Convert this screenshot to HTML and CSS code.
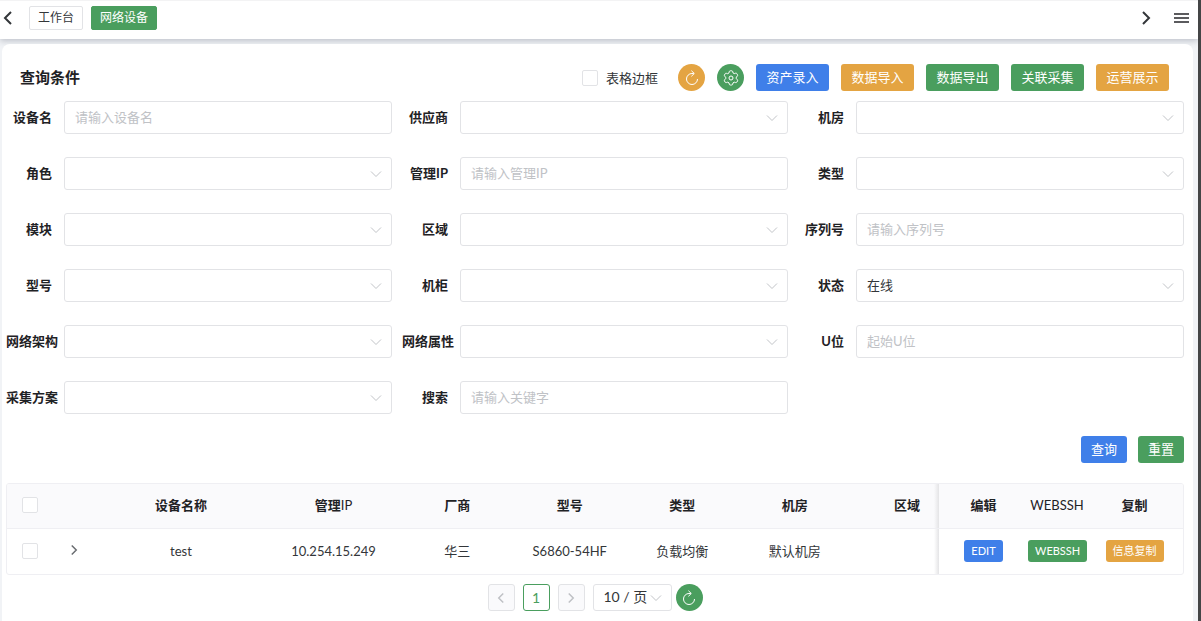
FILE: index.html
```html
<!DOCTYPE html>
<html lang="zh-CN">
<head>
<meta charset="utf-8">
<title>网络设备</title>
<link rel="stylesheet" href="styles.css">
</head>
<body>
<svg class="defs" aria-hidden="true">
  <symbol id="down" viewBox="0 0 12 12"><path d="M1 3.5 6 8.5 11 3.5"/></symbol>
  <symbol id="left" viewBox="0 0 16 16"><path d="M11 2 5 8l6 6"/></symbol>
  <symbol id="right" viewBox="0 0 16 16"><path d="m5 2 6 6-6 6"/></symbol>
  <symbol id="reload" viewBox="0 0 16 16"><path d="M9.800 3.500H8A5.500 5.500 0 1 0 13.500 9M7.400 .700l2.900 2.800-2.900 2.800"/></symbol>
  <symbol id="gear" viewBox="0 0 16 16"><path d="M6.3 1.6Q6.5 .8 7.3 .8h1.4q.8 0 1 .8l.3 1.3 1.3.7 1.3-.4q.8-.2 1.2.4l.7 1.2q.4.7-.2 1.3l-1 1v1.6l1 1q.6.6.2 1.3l-.7 1.2q-.4.6-1.2.4l-1.3-.4-1.3.7-.3 1.3q-.2.8-1 .8H7.3q-.8 0-1-.8L6 12.9l-1.300-.7-1.300.4q-.8.2-1.200-.4l-.7-1.200q-.4-.7.2-1.300l1-1V7.200l-1-1q-.6-.6-.2-1.300l.7-1.200q.4-.6 1.200-.4l1.300.4L6 2.900z"/><circle cx="8" cy="8" r="2"/></symbol>
</svg>

<header class="topbar">
  <button class="nav" aria-label="向左"><svg class="icon"><use href="#left"/></svg></button>
  <nav class="tabs">
    <a class="tab" href="#home">工作台</a>
    <a class="tab active" href="#devices">网络设备</a>
  </nav>
  <button class="nav" aria-label="向右"><svg class="icon"><use href="#right"/></svg></button>
  <button class="nav menu" aria-label="菜单"><svg class="icon" viewBox="0 0 16 16"><path d="M0 4h15M0 8h15M0 12h15"/></svg></button>
</header>

<main class="card">
  <div class="heading">
    <h1>查询条件</h1>
    <label class="border-toggle"><input class="check" type="checkbox">表格边框</label>
    <div class="actions">
      <button class="round orange" aria-label="刷新"><svg><use href="#reload"/></svg></button>
      <button class="round green" aria-label="设置"><svg><use href="#gear"/></svg></button>
      <button class="btn blue">资产录入</button>
      <button class="btn orange">数据导入</button>
      <button class="btn green">数据导出</button>
      <button class="btn green">关联采集</button>
      <button class="btn orange">运营展示</button>
    </div>
  </div>

  <form>
    <div class="fields">
      <div class="field"><label for="name">设备名</label><input id="name" type="text" placeholder="请输入设备名"></div>
      <div class="field"><label for="vendor">供应商</label><span class="select"><select id="vendor"><option></option></select><svg><use href="#down"/></svg></span></div>
      <div class="field"><label for="room">机房</label><span class="select"><select id="room"><option></option></select><svg><use href="#down"/></svg></span></div>

      <div class="field"><label for="role">角色</label><span class="select"><select id="role"><option></option></select><svg><use href="#down"/></svg></span></div>
      <div class="field"><label for="ip">管理IP</label><input id="ip" type="text" placeholder="请输入管理IP"></div>
      <div class="field"><label for="type">类型</label><span class="select"><select id="type"><option></option></select><svg><use href="#down"/></svg></span></div>

      <div class="field"><label for="module">模块</label><span class="select"><select id="module"><option></option></select><svg><use href="#down"/></svg></span></div>
      <div class="field"><label for="zone">区域</label><span class="select"><select id="zone"><option></option></select><svg><use href="#down"/></svg></span></div>
      <div class="field"><label for="serial">序列号</label><input id="serial" type="text" placeholder="请输入序列号"></div>

      <div class="field"><label for="model">型号</label><span class="select"><select id="model"><option></option></select><svg><use href="#down"/></svg></span></div>
      <div class="field"><label for="rack">机柜</label><span class="select"><select id="rack"><option></option></select><svg><use href="#down"/></svg></span></div>
      <div class="field"><label for="status">状态</label><span class="select"><select id="status"><option>在线</option></select><svg><use href="#down"/></svg></span></div>

      <div class="field"><label for="arch">网络架构</label><span class="select"><select id="arch"><option></option></select><svg><use href="#down"/></svg></span></div>
      <div class="field"><label for="attr">网络属性</label><span class="select"><select id="attr"><option></option></select><svg><use href="#down"/></svg></span></div>
      <div class="field"><label for="unit">U位</label><input id="unit" type="text" placeholder="起始U位"></div>

      <div class="field"><label for="plan">采集方案</label><span class="select"><select id="plan"><option></option></select><svg><use href="#down"/></svg></span></div>
      <div class="field"><label for="search">搜索</label><input id="search" type="text" placeholder="请输入关键字"></div>
    </div>
    <div class="submit">
      <button class="btn blue" type="button">查询</button>
      <button class="btn green" type="reset">重置</button>
    </div>
  </form>

  <div class="table-wrap">
    <table>
      <colgroup>
        <col class="c-check"><col class="c-expand"><col class="c-name"><col class="c-ip"><col><col><col><col><col class="c-zone"><col class="c-edit"><col class="c-ssh"><col class="c-copy">
      </colgroup>
      <thead>
        <tr>
          <th><input class="check" type="checkbox" aria-label="全选"></th><th></th><th>设备名称</th><th>管理<span class="latin">IP</span></th><th>厂商</th><th>型号</th><th>类型</th><th>机房</th><th class="zone">区域</th><th>编辑</th><th><span class="latin">WEBSSH</span></th><th>复制</th>
        </tr>
      </thead>
      <tbody>
        <tr>
          <td><input class="check" type="checkbox" aria-label="选择 test"></td><td><button class="expand" aria-label="展开"><svg><use href="#right"/></svg></button></td><td>test</td><td>10.254.15.249</td><td>华三</td><td>S6860-54HF</td><td>负载均衡</td><td>默认机房</td><td class="zone"></td><td><button class="btn small blue">EDIT</button></td><td><button class="btn small green">WEBSSH</button></td><td><button class="btn small orange">信息复制</button></td>
        </tr>
      </tbody>
    </table>
  </div>

  <div class="pager">
    <button class="page" aria-label="上一页" disabled><svg><use href="#left"/></svg></button>
    <button class="page current">1</button>
    <button class="page" aria-label="下一页" disabled><svg><use href="#right"/></svg></button>
    <div class="size">
      <span class="select"><select aria-label="每页条数"><option>10 / 页</option></select><svg><use href="#down"/></svg></span>
      <button class="round green" aria-label="刷新列表"><svg><use href="#reload"/></svg></button>
    </div>
  </div>
</main>
</body>
</html>
```

FILE: styles.css
```css
:root {
  --blue: #3f7fe9;
  --green: #4a9e5e;
  --orange: #e4a442;
  --line: #e2e3e6;
  --text: #333639;
  --strong: #1f2225;
}

* { box-sizing: border-box; }

body {
  margin: 0;
  min-height: 100vh;
  display: flex;
  flex-direction: column;
  background: #f1f3f6;
  border-right: 3px solid #444546;
  color: var(--text);
  font: 14px/20px Lato, "Noto Sans CJK SC", sans-serif;
}

button, input, select { font: inherit; color: inherit; }
button { padding: 0; border: 0; background: none; cursor: pointer; }
svg { fill: none; stroke: currentColor; }
.defs { display: none; }

.topbar {
  display: flex;
  align-items: center;
  height: 39px;
  padding: 0 8px 4px 0;
  border-top: 1px solid #f3f3f4;
  background: #fff;
  box-shadow: 0 2px 6px rgba(60, 70, 90, .28);
}
.nav { display: flex; }
.icon { width: 16px; height: 16px; stroke-width: 2; }
.menu { margin-left: 20px; color: #5b5b5e; }
.tabs { display: flex; flex: 1; gap: 8px; margin-left: 13px; }
.tab {
  padding: 0 8px;
  border: 1px solid var(--line);
  border-radius: 2px;
  font-size: 12px;
  line-height: 22px;
  color: var(--text);
  text-decoration: none;
}
.tab.active { background: var(--green); border-color: var(--green); color: #fff; }

.card {
  flex: 1;
  margin: 5px 5px 0 2px;
  padding: 20px 9px 9px 4px;
  border-radius: 8px 8px 0 0;
  background: #fff;
}

.heading { display: flex; align-items: center; padding: 0 15px 0 14px; }
h1 { flex: 1; margin: 0; padding-bottom: 2px; font-size: 15px; font-weight: 600; color: var(--strong); }
.border-toggle { display: flex; align-items: center; gap: 8px; margin-right: 20px; font-size: 13px; }
.actions { display: flex; gap: 12px; }

.check {
  appearance: none;
  display: block;
  width: 16px;
  height: 16px;
  margin: 0;
  border: 1px solid var(--line);
  border-radius: 2px;
  background: #fff;
}
th .check, td .check { margin: 0 auto; }

.btn {
  height: 27px;
  padding: 0 10px 2px;
  border-radius: 3px;
  color: #fff;
  font-size: 13px;
  white-space: nowrap;
}
.actions .btn { min-width: 73px; }
.btn.small { display: block; height: 22px; margin: 0 auto; padding: 0 7px; font-size: 11px; }
.blue { background: var(--blue); }
.green { background: var(--green); }
.orange { background: var(--orange); }

.round {
  display: grid;
  place-items: center;
  width: 27px;
  height: 27px;
  border-radius: 50%;
  color: #fff;
}
.round svg { width: 16px; height: 16px; }

.fields {
  display: grid;
  grid-template-columns: repeat(3, minmax(0, 1fr));
  gap: 23px 10px;
  margin-top: 10px;
}
.field { display: flex; align-items: center; height: 33px; }
.field label {
  flex: none;
  width: 58px;
  padding: 0 12px 2px 0;
  font-size: 13px;
  font-weight: 700;
  color: var(--strong);
  text-align: right;
  white-space: nowrap;
}
.field input, select {
  width: 100%;
  height: 100%;
  padding: 0 10px 2px;
  border: 1px solid var(--line);
  border-radius: 3px;
  background: #fff;
  appearance: none;
}
.field input, .field select { font-size: 13px; }
.field input { flex: 1; min-width: 0; }
input::placeholder { color: #c0c2c6; }
.select { position: relative; flex: 1; height: 100%; }
.select svg {
  position: absolute;
  top: 50%;
  right: 10px;
  width: 12px;
  height: 12px;
  margin-top: -6px;
  color: #c2c4c8;
  pointer-events: none;
}

.submit { display: flex; justify-content: flex-end; gap: 11px; margin: 22px 0 20px; }

.table-wrap { border: 1px solid #efeff3; border-radius: 3px; overflow: hidden; }
table { width: 100%; table-layout: fixed; border-spacing: 0; }
th, td { height: 45px; padding: 0 0 2px; text-align: center; white-space: nowrap; }
th { border-bottom: 1px solid #efeff3; background-color: #fafafc; color: var(--strong); font-size: 13px; font-weight: 700; }
td { font-size: 13px; }
.latin { font-weight: 400; }
.c-check { width: 45px; }
.c-expand { width: 44px; }
.c-name { width: 170px; }
.c-ip { width: 135px; }
.c-zone { width: 88px; }
.c-edit { width: 89px; }
.c-ssh { width: 58px; }
.c-copy { width: 97px; }
.zone {
  padding-left: 24px;
  background-image: linear-gradient(to left, #e4e4e6, transparent);
  background-size: 5px 100%;
  background-position: right;
  background-repeat: no-repeat;
}
.expand { color: #6b6e72; }
.expand svg { display: block; width: 12px; height: 12px; stroke-width: 2; }

.pager { display: flex; justify-content: center; gap: 8px; height: 27px; margin-top: 9px; }
.page {
  display: grid;
  place-items: center;
  width: 27px;
  border: 1px solid var(--line);
  border-radius: 3px;
  background: #fafafc;
  color: #bfc1c5;
}
.page svg { width: 12px; height: 12px; stroke-width: 2; }
.page.current { border-color: var(--green); background: #fff; color: var(--green); }
.size { display: flex; gap: 4px; }
.size .select { width: 79px; flex: none; }
```
